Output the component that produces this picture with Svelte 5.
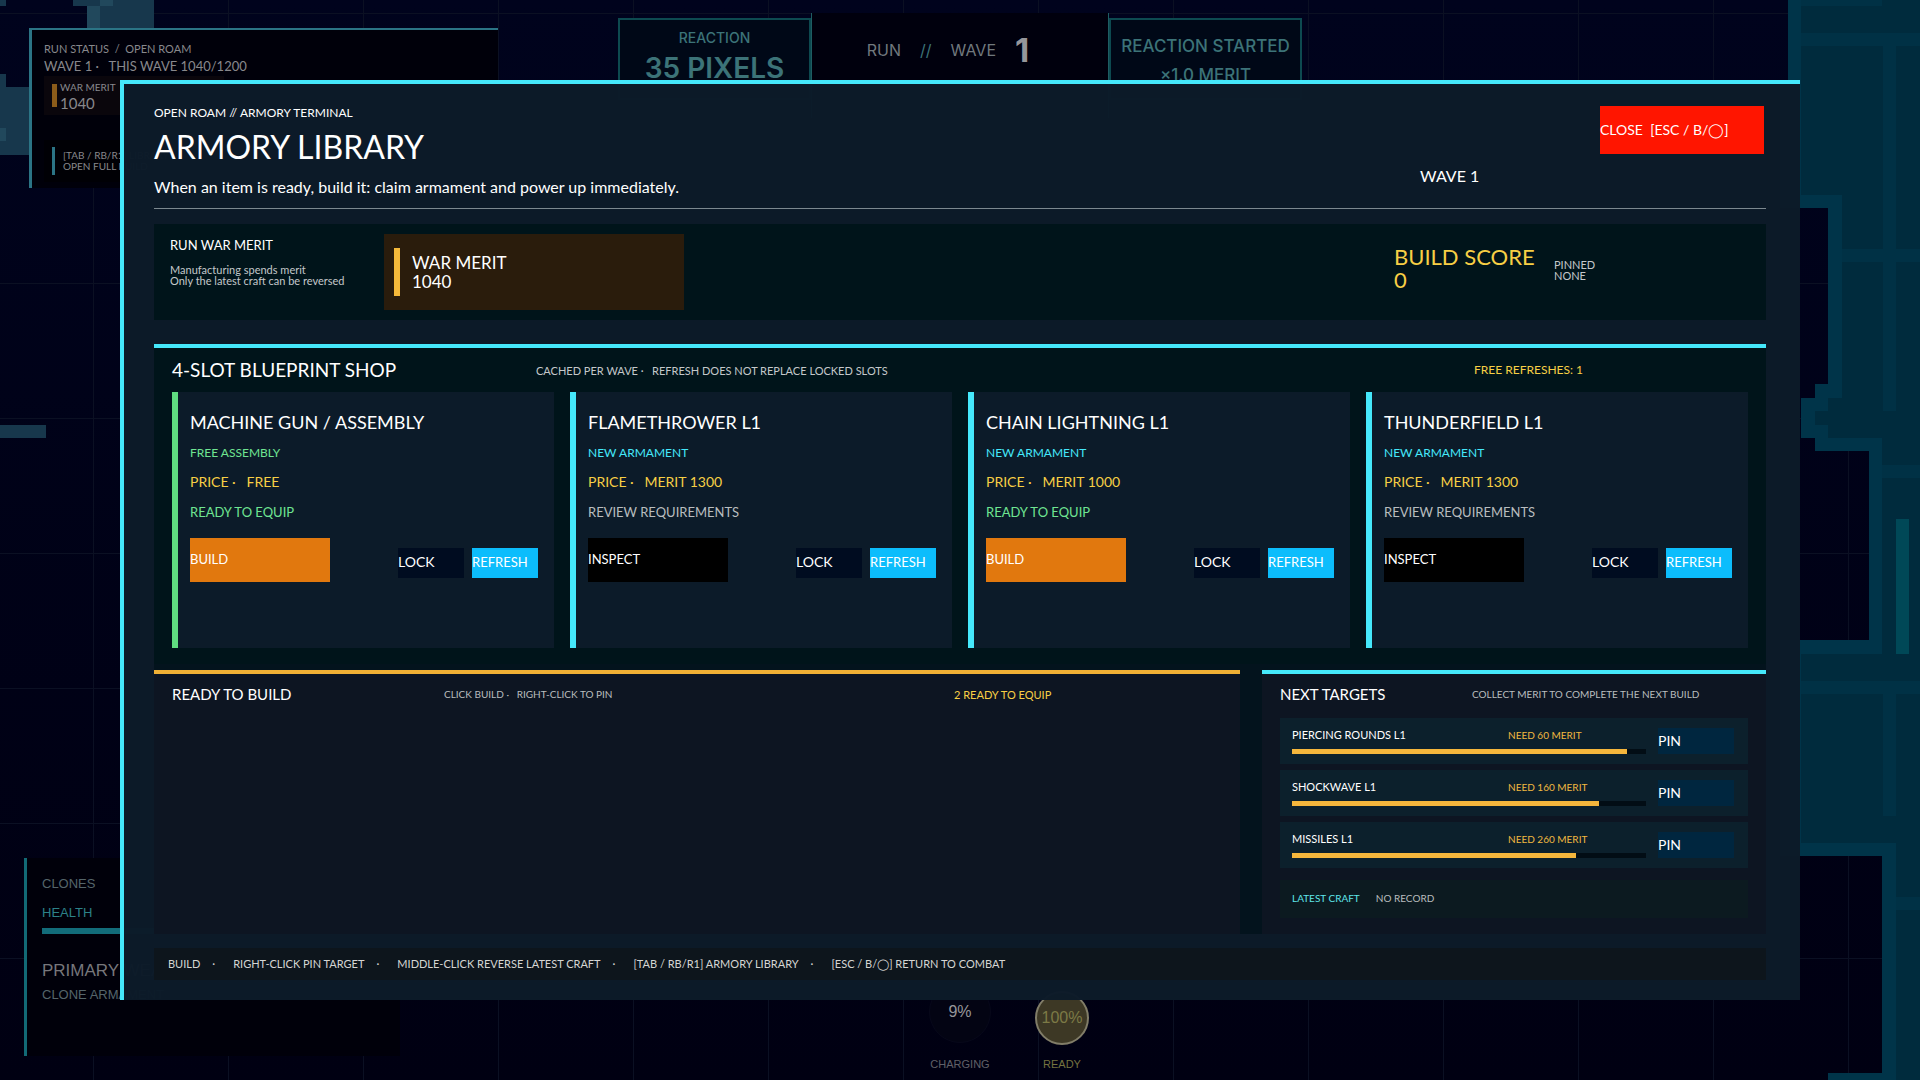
<script lang="ts">
	type Slot = {
		name: string;
		kind: string;
		price: string;
		status: string;
		ready: boolean;
		free?: boolean;
	};

	const slots: Slot[] = [
		{ name: 'MACHINE GUN / ASSEMBLY', kind: 'FREE ASSEMBLY', price: 'FREE', status: 'READY TO EQUIP', ready: true, free: true },
		{ name: 'FLAMETHROWER L1', kind: 'NEW ARMAMENT', price: 'MERIT 1300', status: 'REVIEW REQUIREMENTS', ready: false },
		{ name: 'CHAIN LIGHTNING L1', kind: 'NEW ARMAMENT', price: 'MERIT 1000', status: 'READY TO EQUIP', ready: true },
		{ name: 'THUNDERFIELD L1', kind: 'NEW ARMAMENT', price: 'MERIT 1300', status: 'REVIEW REQUIREMENTS', ready: false }
	];

	let targets = $state([
		{ name: 'PIERCING ROUNDS L1', need: 60, progress: 94.6 },
		{ name: 'SHOCKWAVE L1', need: 160, progress: 86.7 },
		{ name: 'MISSILES L1', need: 260, progress: 80.1 }
	]);

	const hints = [
		'BUILD',
		'RIGHT-CLICK PIN TARGET',
		'MIDDLE-CLICK REVERSE LATEST CRAFT',
		'[TAB / RB/R1] ARMORY LIBRARY',
		'[ESC / B/◯] RETURN TO COMBAT'
	];

	const columns = Array.from({ length: 14 }, (_, i) => 93 + i * 135);
	const rows = Array.from({ length: 8 }, (_, i) => 13 + i * 135);
</script>

<div class="stage">
	<svg class="terrain" viewBox="0 0 1920 1080" preserveAspectRatio="xMidYMid slice" aria-hidden="true">
		<g fill="#0b1023">
			{#each columns as x}
				<rect {x} y="0" width="1" height="1080" />
			{/each}
			{#each rows as y}
				<rect x="0" {y} width="1920" height="1" />
			{/each}
		</g>
		<g fill="#17374c">
			<path d="M0 0h6v6H0zM73 0h81v34H87V6H73zM0 74h6v13h23v68H0zM0 425h46v13H0z" />
			<path fill="#21485c" d="M87 6h13v28H87zM100 0h13v6h-13zM0 128h6v13H0z" />
		</g>
		<path
			fill="#003449"
			d="M1788 0H1920V1080H1828V1073H1882V856H1780V640H1869V451H1815V438H1801V398H1815V384H1828V208H1780V80H1788z"
		/>
		<path
			fill="#002b3d"
			d="M1801 0H1920V1080H1896V843H1801V654H1882V438H1828V425H1815V411H1828V398H1842V195H1801z"
		/>
		<path
			fill="#003145"
			d="M1801 0h81v6h-81zM1801 33h119v13h-119zM1842 249h78v13h-78zM1882 465h38v13h-38zM1801 681h119v13h-119zM1896 897h24v13h-24zM1883 33h13v378h-13zM1883 681h13v135h-13z"
		/>
		<path fill="#004857" d="M1896 519h13v135h-13z" />
	</svg>

	<section class="hud run-status">
		<p class="run-mode">RUN STATUS&nbsp; /&nbsp; OPEN ROAM</p>
		<p class="run-wave">WAVE 1 ·&nbsp;&nbsp; THIS WAVE 1040/1200</p>
		<div class="run-merit">
			<i></i>
			<div><small>WAR MERIT</small><strong>1040</strong></div>
		</div>
		<div class="run-hint">
			<i></i>
			<p>[TAB / RB/R1] LIBRARY<br />OPEN FULL BUILD</p>
		</div>
	</section>

	<section class="hud wave-bar">
		<div class="side">
			<span class="label">REACTION</span>
			<span class="pixels">35 PIXELS</span>
		</div>
		<div class="wave">
			<span>RUN</span><span class="slashes">//</span><span>WAVE</span><b>1</b>
		</div>
		<div class="side started">
			<span>REACTION STARTED</span>
			<span>×1.0 MERIT</span>
		</div>
	</section>

	<section class="hud loadout">
		<p>CLONES</p>
		<p class="health">HEALTH</p>
		<div class="health-bar"></div>
		<p class="primary">PRIMARY WEAPON</p>
		<p>CLONE ARMAMENT</p>
	</section>

	<section class="hud abilities">
		<div class="ability">
			<span class="dial">9%</span>
			<span>CHARGING</span>
		</div>
		<div class="ability charged">
			<span class="dial">100%</span>
			<span>READY</span>
		</div>
	</section>

	<main class="armory">
		<header>
			<div class="heading">
				<p class="eyebrow">OPEN ROAM // ARMORY TERMINAL</p>
				<h1>ARMORY LIBRARY</h1>
				<p class="lead">When an item is ready, build it: claim armament and power up immediately.</p>
			</div>
			<span class="wave-no">WAVE 1</span>
			<button class="close">CLOSE&nbsp; [ESC / B/◯]</button>
		</header>

		<section class="merit">
			<div class="merit-note">
				<h2>RUN WAR MERIT</h2>
				<p>Manufacturing spends merit<br />Only the latest craft can be reversed</p>
			</div>
			<div class="wallet">
				<i></i>
				<p>WAR MERIT<br />1040</p>
			</div>
			<p class="score">BUILD SCORE<br />0</p>
			<p class="pinned">PINNED<br />NONE</p>
		</section>

		<section class="shop">
			<div class="shop-head">
				<h2>4-SLOT BLUEPRINT SHOP</h2>
				<p>CACHED PER WAVE ·&nbsp;&nbsp; REFRESH DOES NOT REPLACE LOCKED SLOTS</p>
				<p class="refreshes">FREE REFRESHES: 1</p>
			</div>
			<div class="slots">
				{#each slots as slot}
					<article class="slot" class:free={slot.free}>
						<h3>{slot.name}</h3>
						<p class="kind">{slot.kind}</p>
						<p class="price">PRICE ·&nbsp;&nbsp; {slot.price}</p>
						<p class="status" class:ready={slot.ready}>{slot.status}</p>
						<div class="actions">
							<button class="main" class:build={slot.ready}>{slot.ready ? 'BUILD' : 'INSPECT'}</button>
							<button class="lock">LOCK</button>
							<button class="refresh">REFRESH</button>
						</div>
					</article>
				{/each}
			</div>
		</section>

		<div class="lower">
			<section class="queue">
				<div class="queue-head">
					<h2>READY TO BUILD</h2>
					<p>CLICK BUILD ·&nbsp;&nbsp; RIGHT-CLICK TO PIN</p>
					<p class="count">2 READY TO EQUIP</p>
				</div>
			</section>

			<section class="targets">
				<div class="targets-head">
					<h2>NEXT TARGETS</h2>
					<p>COLLECT MERIT TO COMPLETE THE NEXT BUILD</p>
				</div>
				<div class="target-list">
					{#each targets as target}
						<div class="target">
							<div class="target-info">
								<div class="target-text">
									<span>{target.name}</span>
									<span class="need">NEED {target.need} MERIT</span>
								</div>
								<div class="track"><div class="fill" style="width: {target.progress}%"></div></div>
							</div>
							<button class="pin">PIN</button>
						</div>
					{/each}
				</div>
				<div class="latest"><span>LATEST CRAFT</span><span>NO RECORD</span></div>
			</section>
		</div>

		<footer>
			{#each hints as hint, i}
				{#if i > 0}<span class="dot">·</span>{/if}
				<span>{hint}</span>
			{/each}
		</footer>
	</main>
</div>

<style>
	:global(body) {
		background: #000118;
	}

	.stage {
		position: relative;
		min-height: 100vh;
		box-sizing: border-box;
		padding: 80px 120px;
		overflow: hidden;
		background: linear-gradient(#00031d, #000012);
		font-family: Lato, 'Noto Sans', sans-serif;
		color: #fff;
		white-space: nowrap;
	}

	.stage * {
		box-sizing: border-box;
	}

	h1,
	h2,
	h3,
	p {
		margin: 0;
		font-weight: 400;
	}

	button {
		border: 0;
		padding: 0 0 2px;
		font: inherit;
		color: #fff;
		text-align: left;
		cursor: pointer;
	}

	.terrain {
		position: absolute;
		inset: 0;
		width: 100%;
		height: 100%;
	}

	/* heads-up display, lies under the armory */
	.hud {
		position: absolute;
	}

	.run-status {
		left: 29px;
		top: 28px;
		width: 469px;
		height: 160px;
		padding: 11px 12px;
		border-top: 2px solid #2b7485;
		border-left: 3px solid #2b7485;
		background: #00000a;
		color: #88888c;
	}

	.run-mode {
		font-size: 11px;
		line-height: 16px;
	}

	.run-wave {
		font-size: 13px;
		line-height: 19px;
	}

	.run-merit,
	.run-hint {
		display: flex;
		align-items: center;
		width: 180px;
		padding-left: 8px;
	}

	.run-merit {
		height: 39px;
		gap: 3px;
		background: #0a060c;
	}

	.run-merit i {
		width: 5px;
		height: 23px;
		background: #8c5c1a;
	}

	.run-merit small,
	.run-merit strong {
		display: block;
		font-weight: 400;
	}

	.run-merit small {
		font-size: 10px;
		line-height: 14px;
	}

	.run-merit strong {
		font-size: 15px;
		line-height: 18px;
	}

	.run-hint {
		height: 42px;
		margin-top: 25px;
		gap: 8px;
		background: #000005;
		font-size: 10px;
		line-height: 11px;
	}

	.run-hint i {
		width: 3px;
		height: 28px;
		background: #2b7485;
	}

	.wave-bar {
		top: 13px;
		left: 50%;
		transform: translateX(-50%);
		width: 684px;
		display: grid;
		grid-template-columns: 193px 1fr 193px;
		align-items: start;
		font-family: Inter, sans-serif;
		color: #3c7378;
	}

	.side {
		display: flex;
		flex-direction: column;
		align-items: center;
		height: 82px;
		margin-top: 5px;
		padding-top: 10px;
		border: 2px solid #0d4a50;
		background: #000817;
		font-weight: 500;
	}

	.label {
		font-size: 14px;
		line-height: 16px;
	}

	.pixels {
		font-size: 28px;
		line-height: 44px;
		font-weight: 600;
	}

	.started {
		padding-top: 16px;
		font-size: 17px;
	}

	.started span {
		line-height: 20px;
	}

	.started span + span {
		margin-top: 9px;
	}

	.wave {
		display: flex;
		align-items: center;
		justify-content: center;
		gap: 19px;
		height: 105px;
		padding: 0 24px 31px 0;
		background: #00000d;
		border-left: 1px solid #1e5d63;
		border-right: 1px solid #1e5d63;
		font-size: 16px;
		color: #70787d;
	}

	.slashes {
		color: #3c7378;
	}

	.wave b {
		font-size: 33px;
		color: #96969a;
	}

	.loadout {
		left: 24px;
		top: 858px;
		width: 376px;
		height: 198px;
		padding: 16px 15px;
		border-left: 3px solid #126a76;
		background: #00000a;
		font-family: 'Liberation Sans', sans-serif;
		font-size: 13px;
		line-height: 20px;
		color: #55656a;
	}

	.loadout .health {
		margin-top: 9px;
		color: #2c8288;
	}

	.health-bar {
		height: 6px;
		margin-top: 5px;
		background: #126c7a;
	}

	.loadout .primary {
		margin: 26px 0 3px;
		font-size: 17px;
		line-height: 22px;
		color: #77777b;
	}

	.abilities {
		left: 50%;
		top: 981px;
		display: flex;
		gap: 40px;
		transform: translateX(-31px);
		font-family: 'Liberation Sans', sans-serif;
		font-size: 11px;
		color: #606068;
	}

	.ability {
		display: flex;
		flex-direction: column;
		align-items: center;
		justify-content: space-between;
		width: 62px;
		height: 89px;
	}

	.dial {
		display: flex;
		align-items: center;
		justify-content: center;
		width: 62px;
		height: 62px;
		border: 1px solid #07081a;
		border-radius: 50%;
		background: #030413;
		font-size: 16px;
		color: #96969a;
	}

	.charged {
		color: #747340;
	}

	.charged .dial {
		width: 54px;
		height: 54px;
		margin-top: 10px;
		border: 2px solid #817d68;
		background: #3d3825;
		color: #7c7a45;
	}

	/* armory */
	.armory {
		position: relative;
		display: flex;
		flex-direction: column;
		padding: 20px 34px 20px 30px;
		border-top: 4px solid #45e8fb;
		border-left: 4px solid #45e8fb;
		background: rgba(12, 27, 41, 0.98);
	}

	header {
		display: flex;
		padding-bottom: 12px;
		border-bottom: 1px solid #7c888f;
	}

	.heading {
		flex: 1;
	}

	.eyebrow {
		font-size: 12px;
		line-height: 18px;
	}

	h1 {
		margin: 3px 0 9px;
		font-size: 32px;
		line-height: 44px;
	}

	.lead {
		font-size: 16px;
		line-height: 18px;
	}

	.wave-no {
		align-self: flex-end;
		width: 180px;
		padding-bottom: 10px;
		font-size: 16px;
		line-height: 20px;
	}

	.close {
		width: 164px;
		height: 48px;
		margin: 2px 2px 0 0;
		background: #ff1500;
		font-size: 14px;
	}

	.merit {
		display: grid;
		grid-template-columns: 214px 300px 1fr 160px 212px;
		align-items: center;
		height: 96px;
		margin: 15px 0 24px;
		padding-left: 16px;
		background: #00141a;
	}

	.merit-note {
		align-self: start;
		padding-top: 12px;
	}

	.merit-note h2 {
		margin-bottom: 10px;
		font-size: 13px;
		line-height: 18px;
	}

	.merit-note p {
		font-size: 11px;
		line-height: 11px;
		color: #c4c8ca;
	}

	.wallet {
		display: flex;
		align-items: center;
		gap: 12px;
		height: 76px;
		padding-left: 10px;
		background: #2a1c0c;
		font-size: 17px;
		line-height: 19px;
	}

	.wallet i {
		width: 6px;
		height: 48px;
		background: #f5b93a;
	}

	.score {
		grid-column: 4;
		padding-bottom: 8px;
		font-size: 22px;
		line-height: 23px;
		color: #f7cf45;
	}

	.pinned {
		padding-bottom: 5px;
		font-size: 11px;
		line-height: 11px;
		color: #c4c8ca;
	}

	.shop {
		padding: 0 18px 16px;
		border-top: 4px solid #45e8fb;
		background: #00141a;
	}

	.shop-head {
		display: grid;
		grid-template-columns: 364px 1fr 274px;
		align-items: center;
		height: 44px;
		font-size: 11px;
		color: #c4c8ca;
	}

	.shop-head h2 {
		padding-bottom: 2px;
		font-size: 19px;
		color: #fff;
	}

	.shop-head .refreshes {
		padding-bottom: 2px;
		font-size: 12px;
		color: #f7cf45;
	}

	.slots {
		display: grid;
		grid-template-columns: repeat(4, 1fr);
		gap: 16px;
	}

	.slot {
		height: 256px;
		padding: 18px 16px 0 12px;
		border-left: 6px solid #45e8fb;
		background: #0c1b29;
		font-size: 14px;
		line-height: 20px;
	}

	.slot.free {
		border-color: #5fdc80;
	}

	.slot h3 {
		font-size: 18px;
		line-height: 24px;
	}

	.kind {
		margin-top: 9px;
		font-size: 12px;
		color: #45e8fb;
	}

	.free .kind,
	.status.ready {
		color: #6fe592;
	}

	.price {
		margin: 9px 0 10px;
	}

	.price {
		color: #f7cf45;
	}

	.status {
		font-size: 13px;
		color: #b9bdbf;
	}

	.actions {
		display: flex;
		align-items: center;
		gap: 8px;
		margin-top: 16px;
		font-size: 13px;
	}

	.main {
		width: 140px;
		height: 44px;
		margin-right: auto;
		background: #000;
	}

	.main.build {
		background: #e1780e;
	}

	.lock,
	.refresh {
		width: 66px;
		height: 30px;
		margin-top: 6px;
	}

	.lock {
		background: #000c20;
		font-size: 14px;
	}

	.refresh {
		background: #0cbdfc;
	}

	.lower {
		display: grid;
		grid-template-columns: 1086fr 504fr;
		gap: 22px;
		padding-top: 6px;
		background: #03131d;
	}

	.queue,
	.targets {
		padding: 0 18px 16px;
		border-top: 4px solid #f0b035;
		background: #0d1522;
	}

	.targets {
		border-color: #45e8fb;
	}

	.queue-head,
	.targets-head {
		display: grid;
		align-items: center;
		height: 40px;
		font-size: 10px;
		color: #b9bdbf;
	}

	.queue-head {
		grid-template-columns: 272px 1fr 268px;
	}

	.targets-head {
		grid-template-columns: 192px 1fr;
		margin-bottom: 4px;
	}

	.lower h2 {
		padding-bottom: 1px;
		font-size: 15px;
		color: #fff;
	}

	.queue-head .count {
		font-size: 11px;
		color: #f7cf45;
	}

	.target-list {
		display: grid;
		gap: 6px;
	}

	.target {
		display: flex;
		align-items: center;
		gap: 12px;
		height: 46px;
		padding: 0 14px 0 12px;
		background: #0c202c;
	}

	.target-info {
		flex: 1;
	}

	.target-text {
		display: grid;
		grid-template-columns: 216px 1fr;
		padding-bottom: 8px;
		font-size: 11px;
		line-height: 12px;
	}

	.need {
		font-size: 10px;
		color: #f0b840;
	}

	.track {
		height: 5px;
		background: #020d15;
	}

	.fill {
		height: 100%;
		background: #f5b63c;
	}

	.pin {
		width: 76px;
		height: 26px;
		background: #00263f;
		font-size: 14px;
	}

	.latest {
		display: flex;
		align-items: center;
		gap: 16px;
		height: 38px;
		margin-top: 12px;
		padding: 0 12px 2px;
		background: #0c1a20;
		font-size: 10px;
		color: #b9bdbf;
	}

	.latest span:first-child {
		color: #5fe6ea;
	}

	footer {
		display: flex;
		align-items: center;
		height: 32px;
		margin-top: 14px;
		padding-left: 14px;
		background: #0d151c;
		font-size: 11px;
		line-height: 16px;
		color: #d5d5d3;
	}

	.dot {
		padding: 0 18px 0 12px;
	}
</style>
